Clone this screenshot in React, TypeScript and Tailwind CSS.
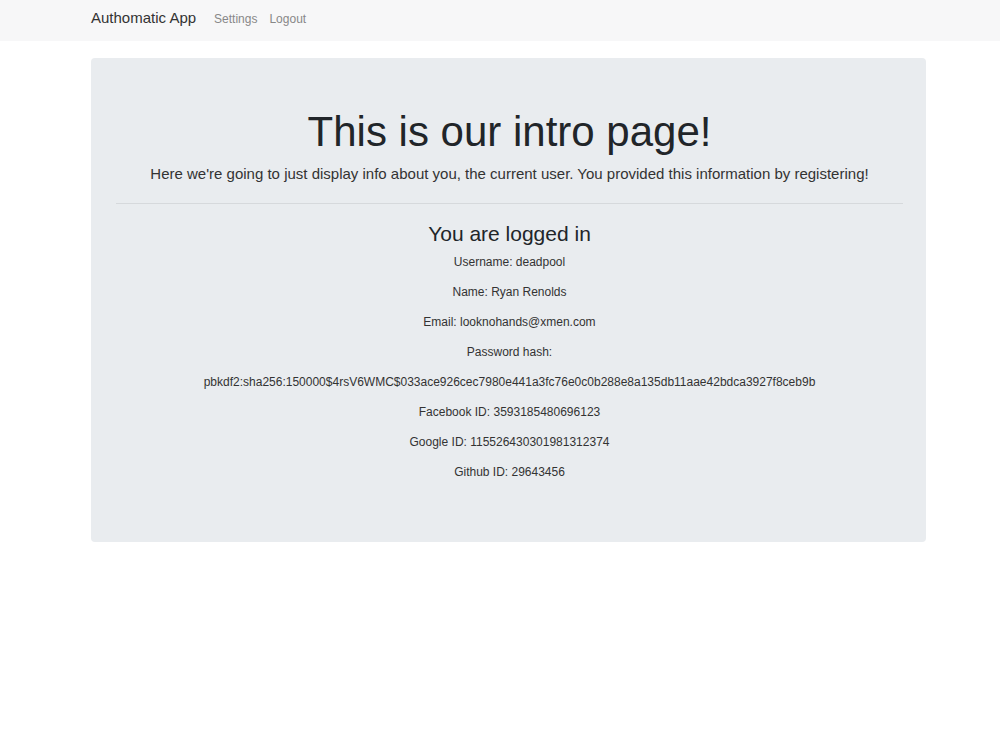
import React from 'react';

const user = {
  username: 'deadpool',
  name: 'Ryan Renolds',
  email: 'looknohands@xmen.com',
  hash: 'pbkdf2:sha256:150000$4rsV6WMC$033ace926cec7980e441a3fc76e0c0b288e8a135db11aae42bdca3927f8ceb9b',
  facebookId: '3593185480696123',
  googleId: '115526430301981312374',
  githubId: '29643456',
};

const App: React.FC = () => {
  const rows = [
    `Username: ${user.username}`,
    `Name: ${user.name}`,
    `Email: ${user.email}`,
    'Password hash:',
    user.hash,
    `Facebook ID: ${user.facebookId}`,
    `Google ID: ${user.googleId}`,
    `Github ID: ${user.githubId}`,
  ];

  return (
    <div className="min-h-[730px] bg-white text-[#212529] font-['Liberation_Sans',Arial,sans-serif]">
      <nav className="h-[41px] bg-[#f7f7f8] pb-[4px]">
        <div className="ml-[91px] flex h-full items-center">
          <span className="text-[15px] text-[#333]">Authomatic App</span>
          <span className="ml-[18px] text-[12px] text-[#888]">Settings</span>
          <span className="ml-[12px] text-[12px] text-[#888]">Logout</span>
        </div>
      </nav>

      <div className="ml-[91px] mt-[17px] w-[835px] rounded-[4px] bg-[#e9ecef] pl-[25px] pr-[23px] pb-[60px] pt-[45px] text-center">
        <h1 className="text-[42px] leading-[58px]">This is our intro page!</h1>
        <p className="text-[15px] leading-[26px] text-[#333]">
          Here we're going to just display info about you, the current user. You provided this information by registering!
        </p>
        <hr className="mt-[16px] border-t border-[#d6d9dc]" />
        <h3 className="mt-[17px] mb-[5px] text-[21px] leading-[26px]">You are logged in</h3>
        <div className="flex flex-col gap-[10px]">
          {rows.map((r, i) => (
            <p key={i} className="text-[12px] leading-[20px] text-[#333]">
              {r}
            </p>
          ))}
        </div>
      </div>
    </div>
  );
};

export default App;
